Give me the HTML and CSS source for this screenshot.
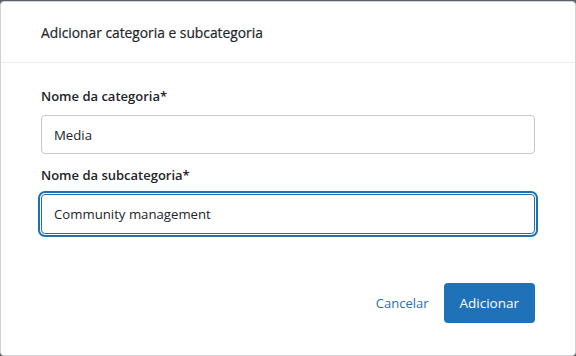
FILE: index.html
```html
<!DOCTYPE html>
<html lang="pt">
<head>
    <meta charset="UTF-8">
    <title>Adicionar categoria e subcategoria</title>
    <link rel="stylesheet" href="styles.css">
</head>
<body>
    <div class="modal">
        <div class="modal-header">
            <h1>Adicionar categoria e subcategoria</h1>
        </div>
        <form class="modal-body">
            <label class="field">
                <span class="label">Nome da categoria*</span>
                <input type="text" class="input" value="Media">
            </label>
            <label class="field">
                <span class="label">Nome da subcategoria*</span>
                <input type="text" class="input focused" value="Community management">
            </label>
        </form>
        <div class="modal-footer">
            <button class="btn-link">Cancelar</button>
            <button class="btn-primary">Adicionar</button>
        </div>
    </div>
</body>
</html>
```

FILE: styles.css
```css
html, body {
    margin: 0;
    padding: 0;
    height: 100%;
}
body {
    background: #5d6166;
    font-family: 'Open Sans', sans-serif;
    color: #212529;
    padding-top: 1px;
    box-sizing: border-box;
}
.modal {
    background: #fff;
    height: 355px;
    border: 1px solid #cfd2d6;
    border-radius: 4px;
    box-sizing: border-box;
    display: flex;
    flex-direction: column;
}
.modal-header {
    height: 60px;
    display: flex;
    align-items: center;
    padding: 0 40px;
    border-bottom: 1px solid #e9ecef;
}
.modal-header h1 {
    margin: 0;
    font-size: 13.8px;
    font-weight: 500;
    -webkit-text-stroke: 0.2px #212529;
}
.modal-body {
    padding: 24px 40px 0;
    display: flex;
    flex-direction: column;
    gap: 12px;
}
.field {
    display: flex;
    flex-direction: column;
    gap: 10px;
}
.label {
    font-size: 13px;
    font-weight: 600;
}
.input {
    height: 39px;
    border: 1px solid #c6c9cc;
    border-radius: 4px;
    padding: 0 12px;
    font-family: inherit;
    font-size: 13.2px;
    color: #212529;
    box-sizing: border-box;
    outline: none;
}
.input.focused {
    height: 40px;
    border-color: #1f6fb4;
    box-shadow: 0 0 0 1px #fff, 0 0 0 3px #1f6fb4;
}
.modal-footer {
    margin-top: auto;
    display: flex;
    justify-content: flex-end;
    align-items: center;
    gap: 15px;
    padding: 0 40px 32px;
}
.btn-link {
    background: none;
    border: none;
    color: #2a6fb0;
    font-family: inherit;
    font-size: 13px;
    padding: 0;
}
.btn-primary {
    background: #1f72b8;
    color: #fff;
    border: none;
    border-radius: 4px;
    height: 40px;
    padding: 0 16px;
    font-family: inherit;
    font-size: 13.5px;
}
```
